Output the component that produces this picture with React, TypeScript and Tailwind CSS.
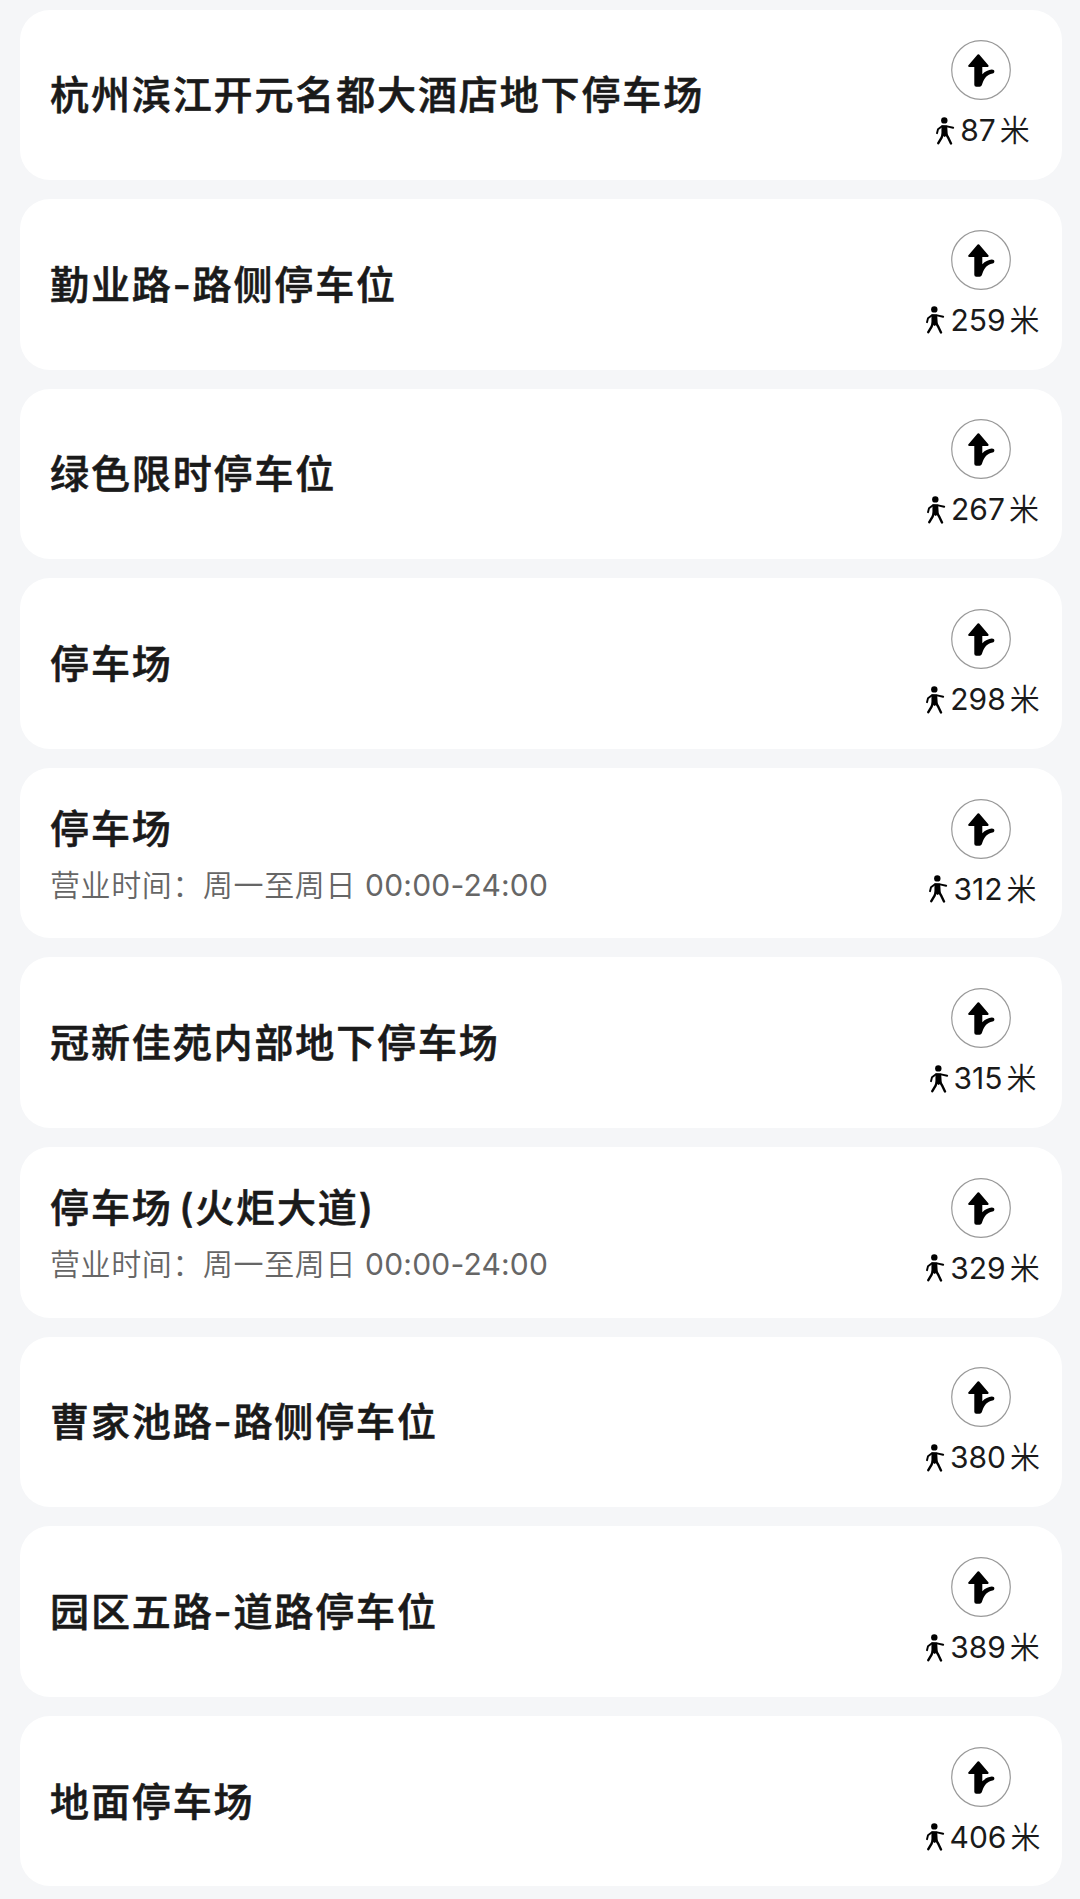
interface ParkingLot {
  name: string;
  distance: number;
  hours?: { days: string; time: string };
}

const allDay = { days: "周一至周日", time: "00:00-24:00" };

const parkingLots: ParkingLot[] = [
  { name: "杭州滨江开元名都大酒店地下停车场", distance: 87 },
  { name: "勤业路-路侧停车位", distance: 259 },
  { name: "绿色限时停车位", distance: 267 },
  { name: "停车场", distance: 298 },
  { name: "停车场", distance: 312, hours: allDay },
  { name: "冠新佳苑内部地下停车场", distance: 315 },
  { name: "停车场 (火炬大道)", distance: 329, hours: allDay },
  { name: "曹家池路-路侧停车位", distance: 380 },
  { name: "园区五路-道路停车位", distance: 389 },
  { name: "地面停车场", distance: 406 },
];

function RouteIcon() {
  return (
    <svg viewBox="0 0 60 60" className="h-[60px] w-[60px]" fill="none">
      <circle cx="30" cy="30" r="29.3" stroke="#999" strokeWidth="1.2" />
      <path
        d="M27.4 15.2 36.6 26H18.2Z"
        fill="#000"
        stroke="#000"
        strokeWidth="2"
        strokeLinejoin="round"
      />
      <path
        d="M23.3 26H31.3V34.2C34 31.6 37.4 30 40.8 29.6 44 29.5 44.2 33 41.6 33.6 36 34.8 33.4 38 31.4 43.6 30.8 46 29.8 46.7 28.6 46.7H25.3Q23.3 46.7 23.3 44.7Z"
        fill="#000"
      />
    </svg>
  );
}

function WalkIcon() {
  return (
    <svg
      viewBox="0 0 20 29"
      className="h-[29px] w-5 shrink-0"
      fill="none"
      stroke="#000"
      strokeLinecap="round"
      strokeLinejoin="round"
    >
      <circle cx="9.3" cy="4.4" r="3.2" fill="#000" stroke="none" />
      {/* arms */}
      <path d="M2 17.2 3 13.2 7 10.2 12 10.4 18.2 11.8" strokeWidth="1.9" />
      {/* torso */}
      <path d="M6.5 9.4H12.2L12.7 18.8 9.6 21 6.4 18.6Z" fill="#000" stroke="none" />
      {/* legs */}
      <path d="M7.7 18.4 6.6 21.6 3.3 27.2M11.3 18.4 13.6 22.4 16 27.4" strokeWidth="2.4" />
    </svg>
  );
}

function ParkingCard({ lot }: { lot: ParkingLot }) {
  return (
    <li className="flex h-[170.5px] items-center justify-between rounded-[30px] bg-white pl-[30px]">
      <div className="pt-px">
        <h2 className="text-[39px] font-medium leading-[52px] tracking-[1.88px] text-[#1a1a1a] [-webkit-text-stroke:0.6px_#1a1a1a] [word-spacing:-6px]">
          {lot.name}
        </h2>
        {lot.hours && (
          <p className="mt-[10px] text-[30px] font-[350] leading-10 tracking-[0.6px] text-[#666]">
            营业时间：{lot.hours.days}{" "}
            <span className="font-normal tracking-[0.2px]">{lot.hours.time}</span>
          </p>
        )}
      </div>

      {/* Route and walking distance */}
      <div className="flex w-[162px] flex-col items-center pt-px">
        <RouteIcon />
        <div className="mt-2.5 flex h-10 items-center pl-[3px] text-[#1a1a1a]">
          <WalkIcon />
          <span className="ml-[5px] text-[30px] leading-10">{lot.distance}</span>
          <span className="ml-1 text-[30px] font-[350] leading-10">米</span>
        </div>
      </div>
    </li>
  );
}

export default function App() {
  return (
    <main className="min-h-[1899px] bg-[#f5f6f8] pl-5 pr-[18px] pt-[9.5px] font-['Inter','Noto_Sans_CJK_SC',sans-serif]">
      <ul className="flex flex-col gap-[19.1px]">
        {parkingLots.map((lot) => (
          <ParkingCard key={lot.distance} lot={lot} />
        ))}
      </ul>
    </main>
  );
}
